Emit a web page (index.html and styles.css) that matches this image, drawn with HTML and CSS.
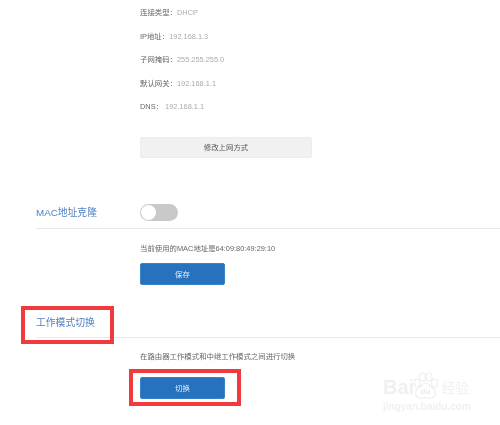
FILE: index.html
```html
<!DOCTYPE html>
<html lang="zh-CN">
<head>
<meta charset="utf-8">
<title>工作模式切换</title>
<link rel="stylesheet" href="styles.css">
</head>
<body>
<main class="page">
  <section class="info">
    <p class="row"><span class="label">连接类型：</span><span class="value">DHCP</span></p>
    <p class="row"><span class="label">IP地址：</span><span class="value">192.168.1.3</span></p>
    <p class="row"><span class="label">子网掩码：</span><span class="value">255.255.255.0</span></p>
    <p class="row"><span class="label">默认网关：</span><span class="value">192.168.1.1</span></p>
    <p class="row"><span class="label">DNS： </span><span class="value">192.168.1.1</span></p>
    <button class="btn btn-grey">修改上网方式</button>
  </section>

  <section class="mac">
    <header class="head head-mac">
      <h2 class="title">MAC地址克隆</h2>
      <span class="toggle"><span class="knob"></span></span>
    </header>
    <div class="body body-mac">
      <p class="note">当前使用的MAC地址是64:09:80:49:29:10</p>
      <button class="btn btn-blue">保存</button>
    </div>
  </section>

  <section class="mode">
    <header class="head head-mode">
      <h2 class="title">工作模式切换</h2>
    </header>
    <div class="body body-mode">
      <p class="note">在路由器工作模式和中继工作模式之间进行切换</p>
      <button class="btn btn-blue">切换</button>
    </div>
  </section>
</main>

<div class="mark mark-title"></div>
<div class="mark mark-button"></div>

<div class="wm">
  <div class="wm-top">
    <span class="wm-bai">Bai</span>
    <svg class="wm-paw" width="27" height="28" viewBox="0 0 27 28">
      <g fill="#fff" stroke="#eeeeee" stroke-width="1.2">
        <ellipse cx="5" cy="11" rx="3" ry="4"/>
        <ellipse cx="10.5" cy="5" rx="3" ry="4"/>
        <ellipse cx="17" cy="5" rx="3" ry="4"/>
        <ellipse cx="22.5" cy="11" rx="3" ry="4"/>
        <path d="M13.500 11c-3 0-4 3-7 5-4 2-4 9 1 10 2 .5 4-.5 6-.5s4 1 6 .5c5-1 5-8 1-10-3-2-4-5-7-5z"/>
      </g>
      <text class="wm-du" x="13.500" y="22" text-anchor="middle">du</text>
    </svg>
    <span class="wm-cn">经验</span>
  </div>
  <div class="wm-url">jingyan.baidu.com</div>
</div>
</body>
</html>
```

FILE: styles.css
```css
* { box-sizing: border-box; }

html, body {
  margin: 0;
  padding: 0;
  width: 500px;
  height: 425px;
  overflow: hidden;
  background: #fff;
}

body {
  position: relative;
  font-family: "Liberation Sans", "Noto Sans CJK SC", sans-serif;
  font-size: 7.4px;
  color: #555;
  filter: blur(0.3px);
}

.page { display: flex; flex-direction: column; }

p, h2 { margin: 0; font-weight: normal; }

.info {
  display: flex;
  flex-direction: column;
  align-items: flex-start;
  padding: 1px 0 0 140px;
}

.row {
  height: 23.6px;
  line-height: 23.6px;
  white-space: pre;
}

.label { color: #666; }
.value { color: #aaa; }

.btn {
  display: block;
  padding: 0 0 1px;
  border-radius: 2px;
  font-family: inherit;
  font-size: 7.4px;
  text-align: center;
}

.btn-grey {
  width: 172px;
  height: 21px;
  margin-top: 18px;
  background: #f1f1f1;
  border: 1px solid #ececec;
  color: #555;
}

.btn-blue {
  width: 85px;
  height: 22px;
  background: #2672bf;
  border: 1px solid #3a82c8;
  color: #e4eef8;
}

.mac { margin-top: 28px; }
.mode { margin-top: 15px; }

.head {
  display: flex;
  align-items: center;
  margin-left: 36px;
  border-bottom: 1px solid #e9e9e9;
}

.head-mac { height: 43px; padding: 13px 0 2px; }
.head-mode { height: 38px; padding: 10px 0 3px; }

.title {
  font-size: 9.8px;
  color: #4f80c4;
  width: 104px;
  white-space: nowrap;
}

.toggle {
  display: flex;
  align-items: center;
  width: 38px;
  height: 17px;
  padding-left: 1px;
  border-radius: 9px;
  background: #c9c9c9;
}

.knob {
  width: 15px;
  height: 15px;
  border-radius: 50%;
  background: #fff;
}

.body { padding-left: 140px; }
.body-mac { padding-top: 13px; }
.body-mode { padding-top: 12px; }

.note {
  height: 21px;
  line-height: 13px;
  color: #666;
  white-space: nowrap;
}

.body-mode .note { height: 27px; }

.mark {
  position: absolute;
  border: 4px solid #f03a3d;
}

.mark-title { left: 21px; top: 306px; width: 93px; height: 38px; }
.mark-button { left: 129px; top: 369px; width: 112px; height: 37px; }

.wm {
  position: absolute;
  left: 383px;
  top: 372px;
  width: 92px;
  color: #f0f0f0;
}

.wm-top { display: flex; align-items: flex-end; }
.wm-bai { font-size: 20px; line-height: 26px; font-weight: bold; }
.wm-paw { display: block; flex: none; margin-left: -2px; }
.wm-du { font-size: 8px; font-weight: bold; fill: #e8e8e8; }
.wm-cn { font-size: 14px; line-height: 24px; margin-left: 2px; white-space: nowrap; }
.wm-url { font-size: 10px; line-height: 12px; margin-top: 1px; font-weight: bold; white-space: nowrap; }
```
